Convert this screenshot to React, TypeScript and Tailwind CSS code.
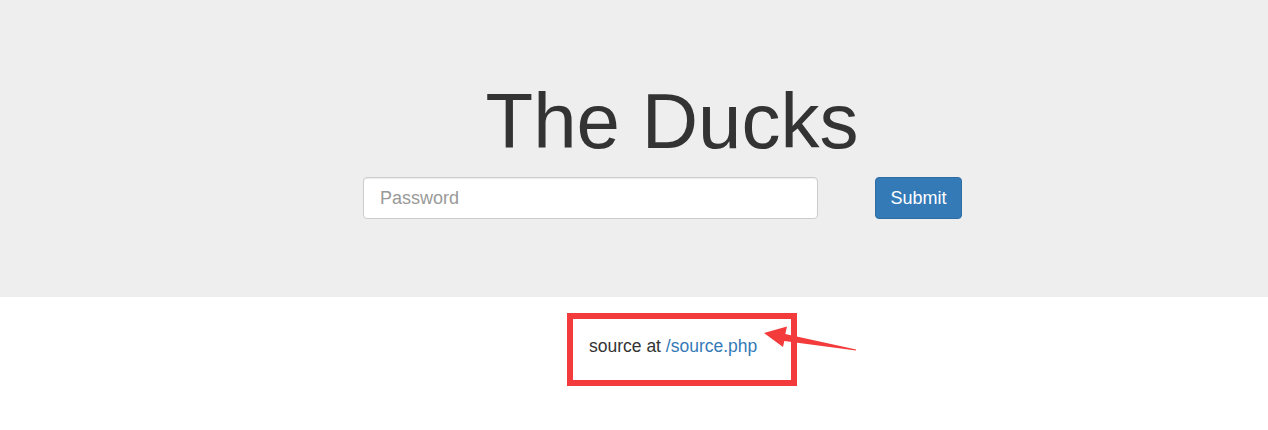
import React from 'react';

export default function App() {
  return (
    <div className="relative w-full min-h-[430px] bg-white text-[#333] font-['Liberation_Sans',Arial,sans-serif]">
      {/* Jumbotron */}
      <div className="h-[297px] bg-[#eeeeee] pt-[77px]">
        <div className="flex justify-center">
          <h1 className="ml-[76px] text-[78px] leading-[88px] font-normal text-[#333]">The Ducks</h1>
        </div>

        {/* Form */}
        <form className="flex items-center mt-[12px] pl-[363px]">
          <input
            type="password"
            placeholder="Password"
            className="w-[455px] h-[42px] px-[16px] text-[18px] bg-white border border-[#ccc] rounded-[4px] placeholder:text-[#999] shadow-[inset_0_1px_1px_rgba(0,0,0,0.075)] focus:outline-none"
          />
          <button
            type="button"
            className="ml-[57px] w-[87px] h-[42px] text-[18px] text-white bg-[#337ab7] border border-[#2e6da4] rounded-[4px]"
          >
            Submit
          </button>
        </form>
      </div>

      {/* Source link, boxed in red */}
      <div className="pl-[567px] pt-[16px]">
        <div className="box-border w-[230px] h-[73px] border-[6px] border-[#f33b3b] pl-[16px] pt-[14px] text-[17.5px] leading-[26px]">
          source at <a href="#" className="text-[#337ab7]">/source.php</a>
        </div>
      </div>

      {/* Annotation arrow */}
      <svg
        className="absolute left-0 top-0 pointer-events-none"
        width="1268"
        height="430"
        viewBox="0 0 1268 430"
      >
        <polygon
          points="764,333 787,326.5 785.3,334 856.1,349.6 855.9,350.6 784.3,341 783,347"
          fill="#f33b3b"
        />
      </svg>
    </div>
  );
}
